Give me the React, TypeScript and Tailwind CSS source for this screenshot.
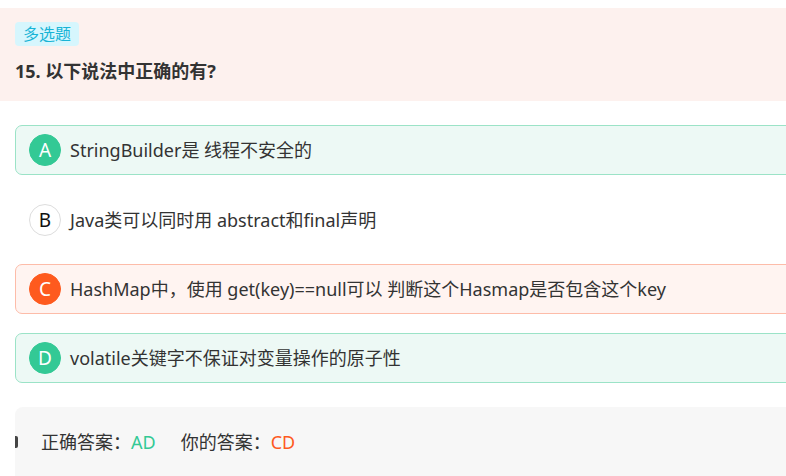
import React from 'react';

type Opt = { key: string; text: string; state: 'right' | 'wrong' | 'none' };

const options: Opt[] = [
  { key: 'A', text: 'StringBuilder是 线程不安全的', state: 'right' },
  { key: 'B', text: 'Java类可以同时用 abstract和final声明', state: 'none' },
  { key: 'C', text: 'HashMap中，使用 get(key)==null可以 判断这个Hasmap是否包含这个key', state: 'wrong' },
  { key: 'D', text: 'volatile关键字不保证对变量操作的原子性', state: 'right' },
];

function OptionRow({ opt }: { opt: Opt }) {
  const box =
    opt.state === 'right'
      ? 'bg-[#edf9f5] border-[#9be3c7]'
      : opt.state === 'wrong'
        ? 'bg-[#fff4f1] border-[#fdbca9]'
        : 'bg-white border-transparent';
  const dot =
    opt.state === 'right'
      ? 'bg-[#33c995] text-white border-[#33c995]'
      : opt.state === 'wrong'
        ? 'bg-[#fe5a1e] text-white border-[#fe5a1e]'
        : 'bg-white text-[#111] border-[#dddddd]';
  return (
    <div className={`flex items-center h-[50px] w-[800px] border rounded-[7px] pl-[13px] ${box}`}>
      <div className={`w-8 h-8 rounded-full border flex items-center justify-center text-[19px] shrink-0 ${dot}`}>
        {opt.key}
      </div>
      <span className="ml-[9px] text-[18px] text-[#333]">{opt.text}</span>
    </div>
  );
}

export default function App() {
  return (
    <div
      className="w-[786px] h-[476px] overflow-hidden bg-white pt-2"
      style={{ fontFamily: '"Noto Sans", "Noto Sans CJK SC", sans-serif' }}
    >
      {/* Question header */}
      <div className="bg-[#fdf1ee] h-[93px] pl-[15px] pt-[14px]">
        <span className="inline-block bg-[#d6f6fd] text-[#18b4d6] text-[16px] leading-6 px-2 rounded-[4px]">
          多选题
        </span>
        <h2 className="mt-[13px] text-[18px] font-bold text-[#333] leading-6">15. 以下说法中正确的有?</h2>
      </div>

      {/* Options */}
      <div className="pl-[15px] mt-6 flex flex-col">
        <OptionRow opt={options[0]} />
        <div className="mt-5"><OptionRow opt={options[1]} /></div>
        <div className="mt-[19px]"><OptionRow opt={options[2]} /></div>
        <div className="mt-[19px]"><OptionRow opt={options[3]} /></div>
      </div>

      {/* Answer card */}
      <div className="ml-[15px] mt-6 w-[800px] h-[120px] bg-[#f7f7f7] rounded-[8px] relative pt-[24px] pl-[26px]">
        <div className="absolute left-0 top-[29px] w-[3px] h-3 rounded-r-[2px] bg-[#444]" />
        <div className="text-[18px] text-[#333] leading-[22px]">
          正确答案：<span className="text-[#33c995]">AD</span>
          <span className="ml-[25px]">你的答案：</span>
          <span className="text-[#fe5a1e]">CD</span>
        </div>
      </div>
    </div>
  );
}
